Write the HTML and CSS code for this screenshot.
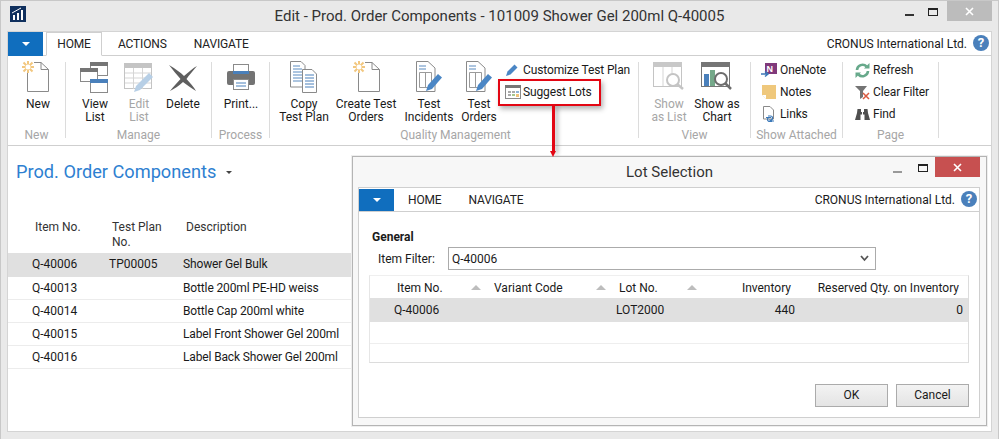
FILE: index.html
```html
<!DOCTYPE html>
<html lang="en">
<head>
    <meta charset="UTF-8">
    <title>Edit - Prod. Order Components</title>
    <link rel="stylesheet" href="styles.css">
</head>
<body>
<svg class="defs" width="0" height="0">
    <symbol id="new-page" viewBox="0 0 27 32">
        <path d="M5.500 8V30.500H26.500V8.500L19 1.500H12M19 1.500V8.500H26.500" fill="#fff" stroke="#8a8a8a"/>
        <g stroke="#f2c77f" stroke-width="2"><path d="M6 0V12M0 6H12M1.500 1.500L10.500 10.500M10.500 1.500L1.500 10.500"/></g>
        <circle cx="6" cy="6" r="2.500" fill="#fff"/>
    </symbol>
    <symbol id="doc-copy" viewBox="0 0 28 32">
        <path d="M.5 .5H11L15 4.500V26H.5Z" fill="#fff" stroke="#8a8a8a"/>
        <path d="M3 5H10M3 8H12M3 11H12M3 14H12M3 17H12M3 20H12" stroke="#5b8bc0"/>
        <path d="M12.500 8.500H22L26.500 13V31.500H12.500Z" fill="#fff" stroke="#8a8a8a"/>
        <path d="M15 14H24M15 17H24M15 20H24M15 23H24M15 26H24" stroke="#4a80bb"/>
    </symbol>
    <symbol id="doc-edit" viewBox="0 0 28 32">
        <path d="M1.500 .5H13L20 7V30.500H1.500Z" fill="#fff" stroke="#8a8a8a"/>
        <path d="M4 5H11M4 8H11" stroke="#5b8bc0"/>
        <path d="M4.500 11.500H16.500V26.500H4.500ZM10.500 11.500V26.500" fill="none" stroke="#9a9a9a"/>
        <path d="M11 30L13 24L23 13L27 16.500L17 28Z" fill="#4a86c5"/>
    </symbol>
    <symbol id="pencil" viewBox="0 0 14 14">
        <path d="M1 13L2.500 8.500L9.500 1.500L12.500 4.500L5.500 11.500Z" fill="#4a86c5"/>
    </symbol>
</svg>

<div class="window">
    <div class="titlebar">
        <svg class="logo" width="16" height="16" viewBox="0 0 16 16">
            <rect width="16" height="16" fill="#10305e"/>
            <path d="M3 9H5V14H3ZM7 7H9V14H7ZM11 4H13V14H11Z" fill="#fff"/>
            <path d="M2 7L11 2" stroke="#fff"/>
        </svg>
        <div class="title">Edit - Prod. Order Components - 101009 Shower Gel 200ml Q-40005</div>
        <div class="min-btn"></div>
        <div class="max-btn"></div>
        <div class="close-btn gray">
            <svg width="9" height="9" viewBox="0 0 9 9"><path d="M1 1L8 8M8 1L1 8" stroke="#fff" stroke-width="1.600"/></svg>
        </div>
    </div>

    <div class="main">
        <div class="tabs">
            <div class="app-btn"><span class="caret"></span></div>
            <div class="tab active">HOME</div>
            <div class="tab tab-actions">ACTIONS</div>
            <div class="tab tab-nav">NAVIGATE</div>
            <div class="company">CRONUS International Ltd.</div>
            <div class="help">?</div>
        </div>

        <div class="ribbon">
            <div class="group g-new">
                <div class="buttons">
                    <div class="big w38">
                        <svg class="icon" width="27" height="32"><use href="#new-page"/></svg>
                        <span>New</span>
                    </div>
                </div>
                <div class="group-label">New</div>
            </div>

            <div class="group g-manage">
                <div class="buttons">
                    <div class="big w44">
                        <svg class="icon" width="30" height="32" viewBox="0 0 30 32">
                            <rect x="10.500" y="1.500" width="17" height="13" fill="#fff" stroke="#8a8a8a"/><rect x="10" y="1" width="18" height="4" fill="#757575"/>
                            <rect x=".500" y="7.500" width="17" height="13" fill="#fff" stroke="#8a8a8a"/><rect y="7" width="18" height="4" fill="#757575"/>
                            <rect x="10.500" y="18.500" width="17" height="13" fill="#fff" stroke="#8a8a8a"/><rect x="10" y="18" width="18" height="4" fill="#4a80bb"/>
                        </svg>
                        <span>View<br>List</span>
                    </div>
                    <div class="big w44 off">
                        <svg class="icon" width="30" height="32" viewBox="0 0 30 32">
                            <rect x=".500" y="2.500" width="27" height="25" fill="#fff" stroke="#c4c4c4"/><rect y="2" width="28" height="5" fill="#c4c4c4"/>
                            <path d="M1 12H27M1 17H27M1 22H27M9.500 7V28M18.500 7V28" stroke="#d5d5d5"/>
                            <path d="M10 31L12 25L25 12L29 16L16 29Z" fill="#b7cfe6"/>
                        </svg>
                        <span>Edit<br>List</span>
                    </div>
                    <div class="big w44">
                        <svg class="icon" width="30" height="32" viewBox="0 0 30 32">
                            <path d="M1 4C8 8 13 12 16 15C21 11 25 7 29 5C25 10 21 14 18.500 18C22 22 26 26 28 30C23 27 19 24 15 21C11 25 6 28 2 30C5 26 9 22 12.500 18C9 14 5 9 1 4Z" fill="#5f5f5f"/>
                        </svg>
                        <span>Delete</span>
                    </div>
                </div>
                <div class="group-label">Manage</div>
            </div>

            <div class="group g-process">
                <div class="buttons">
                    <div class="big w58">
                        <svg class="icon" width="30" height="32" viewBox="0 0 30 32">
                            <rect x="7.500" y="3.500" width="15" height="9" fill="#fff" stroke="#8a8a8a"/>
                            <rect x="1" y="10" width="28" height="14" rx="2" fill="#737373"/>
                            <rect x="7" y="10" width="16" height="3" fill="#4a80bb"/>
                            <rect x="7.500" y="18.500" width="15" height="10" fill="#fff" stroke="#8a8a8a"/>
                            <path d="M10 22H20M10 25H20" stroke="#4a80bb"/>
                        </svg>
                        <span>Print...</span>
                    </div>
                </div>
                <div class="group-label">Process</div>
            </div>

            <div class="group g-quality">
                <div class="buttons">
                    <div class="big w62">
                        <svg class="icon" width="28" height="32"><use href="#doc-copy"/></svg>
                        <span>Copy<br>Test Plan</span>
                    </div>
                    <div class="big w62">
                        <svg class="icon" width="27" height="32"><use href="#new-page"/></svg>
                        <span>Create Test<br>Orders</span>
                    </div>
                    <div class="big w64">
                        <svg class="icon" width="28" height="32"><use href="#doc-edit"/></svg>
                        <span>Test<br>Incidents</span>
                    </div>
                    <div class="big w36">
                        <svg class="icon" width="28" height="32"><use href="#doc-edit"/></svg>
                        <span>Test<br>Orders</span>
                    </div>
                    <div class="smalls s-quality">
                        <div class="small">
                            <svg width="14" height="14"><use href="#pencil"/></svg>
                            <span>Customize Test Plan</span>
                        </div>
                        <div class="small">
                            <svg width="16" height="14" viewBox="0 0 16 14">
                                <rect x=".500" y=".500" width="15" height="13" fill="#fff" stroke="#8a8a8a"/><rect width="16" height="3" fill="#777"/>
                                <path d="M3 6H6V8H3ZM7 6H10V8H7ZM3 9H6V11H3Z" fill="#aaa"/>
                                <path d="M11 6H14V8H11Z" fill="#8fb4d8"/><path d="M7 9H10V11H7Z" fill="#a5c78e"/><path d="M11 9H14V12H11Z" fill="#eec27a"/>
                            </svg>
                            <span>Suggest Lots</span>
                        </div>
                    </div>
                </div>
                <div class="group-label">Quality Management</div>
            </div>

            <div class="group g-view">
                <div class="buttons">
                    <div class="big w48 off">
                        <svg class="icon" width="32" height="32" viewBox="0 0 32 32">
                            <rect x=".500" y="1.500" width="28" height="24" fill="#fff" stroke="#c4c4c4"/><rect y="1" width="29" height="5" fill="#c8c8c8"/>
                            <path d="M10 6V25M19 6V16" stroke="#d5d5d5"/>
                            <circle cx="20" cy="19" r="6" fill="#fff" stroke="#c4c4c4" stroke-width="2"/><path d="M24 23L30 28" stroke="#c4c4c4" stroke-width="2.500"/>
                        </svg>
                        <span>Show<br>as List</span>
                    </div>
                    <div class="big w48">
                        <svg class="icon" width="32" height="32" viewBox="0 0 32 32">
                            <rect x=".500" y="1.500" width="28" height="24" fill="#fff" stroke="#757575"/><rect y="1" width="29" height="5" fill="#757575"/>
                            <rect x="3" y="13" width="5" height="12" fill="#4a80bb"/><rect x="9" y="9" width="5" height="16" fill="#75a98a"/>
                            <circle cx="20" cy="18" r="6" fill="#fff" stroke="#6d6d6d" stroke-width="2"/><path d="M24 22L30 28" stroke="#6d6d6d" stroke-width="2.500"/>
                        </svg>
                        <span>Show as<br>Chart</span>
                    </div>
                </div>
                <div class="group-label">View</div>
            </div>

            <div class="group g-attached">
                <div class="smalls">
                    <div class="small">
                        <svg width="16" height="16" viewBox="0 0 16 16">
                            <rect x="4" y="1" width="12" height="11" fill="#80397b"/>
                            <text x="5.500" y="10" class="onenote-n">N</text>
                            <path d="M0 12H6M4 9.500L7 12L4 14.500" fill="none" stroke="#3b78b8" stroke-width="1.500"/>
                        </svg>
                        <span>OneNote</span>
                    </div>
                    <div class="small">
                        <svg width="16" height="16" viewBox="0 0 16 16">
                            <path d="M1 1H15V15H5L1 11Z" fill="#efc87c"/><path d="M1 11H5V15Z" fill="#fff"/>
                        </svg>
                        <span>Notes</span>
                    </div>
                    <div class="small">
                        <svg width="16" height="16" viewBox="0 0 16 16">
                            <path d="M2.500 .5H9L12.500 4V13H2.500Z" fill="#fff" stroke="#8a8a8a"/>
                            <path d="M5 11.500H9M9 15H13M7 10H9.500A2 2 0 0 1 9.500 14H8M11 15.500H8.500A2 2 0 0 1 8.500 11.500H10" fill="none" stroke="#3b78b8" stroke-width="1.200"/>
                        </svg>
                        <span>Links</span>
                    </div>
                </div>
                <div class="group-label">Show Attached</div>
            </div>

            <div class="group g-page">
                <div class="smalls">
                    <div class="small">
                        <svg width="15" height="15" viewBox="0 0 15 15">
                            <path d="M2 7A5.500 5.500 0 0 1 11.500 3.500" fill="none" stroke="#67a98b" stroke-width="2.600"/><path d="M9 5.500H14.500V0Z" fill="#67a98b"/>
                            <path d="M13 8A5.500 5.500 0 0 1 3.500 11.500" fill="none" stroke="#67a98b" stroke-width="2.600"/><path d="M6 9.500H.5V15Z" fill="#67a98b"/>
                        </svg>
                        <span>Refresh</span>
                    </div>
                    <div class="small">
                        <svg width="15" height="15" viewBox="0 0 15 15">
                            <path d="M0 1H12L8 6V12L5 14V6Z" fill="#747474"/>
                            <path d="M8 8L14 14M14 8L8 14" stroke="#d9593f" stroke-width="1.500"/>
                        </svg>
                        <span>Clear Filter</span>
                    </div>
                    <div class="small">
                        <svg width="15" height="15" viewBox="0 0 15 15">
                            <path d="M2.500 2H6V5H9V2H12.500L13 6L15 13H9.500V7.500H5.500V13H0L2 6Z" fill="#4f4f4f"/>
                            <path d="M7.500 5V13" stroke="#fff"/>
                        </svg>
                        <span>Find</span>
                    </div>
                </div>
                <div class="group-label">Page</div>
            </div>
        </div>

        <div class="page">
            <div class="page-title">Prod. Order Components <span class="title-caret"></span></div>
            <div class="list">
                <div class="list-row list-head">
                    <div class="c-item">Item No.</div>
                    <div class="c-plan">Test Plan<br>No.</div>
                    <div class="c-desc">Description</div>
                </div>
                <div class="list-row item selected">
                    <div class="c-item">Q-40006</div><div class="c-plan">TP00005</div><div class="c-desc">Shower Gel Bulk</div>
                </div>
                <div class="list-row item">
                    <div class="c-item">Q-40013</div><div class="c-plan"></div><div class="c-desc">Bottle 200ml PE-HD weiss</div>
                </div>
                <div class="list-row item">
                    <div class="c-item">Q-40014</div><div class="c-plan"></div><div class="c-desc">Bottle Cap 200ml white</div>
                </div>
                <div class="list-row item">
                    <div class="c-item">Q-40015</div><div class="c-plan"></div><div class="c-desc">Label Front Shower Gel 200ml</div>
                </div>
                <div class="list-row item">
                    <div class="c-item">Q-40016</div><div class="c-plan"></div><div class="c-desc">Label Back Shower Gel 200ml</div>
                </div>
            </div>
        </div>
    </div>

    <div class="callout"></div>
    <div class="arrow"></div>

    <div class="dialog">
        <div class="dialog-title">
            <div class="title small-title">Lot Selection</div>
            <div class="min-btn"></div>
            <div class="max-btn"></div>
            <div class="close-btn red">
                <svg width="9" height="9" viewBox="0 0 9 9"><path d="M1 1L8 8M8 1L1 8" stroke="#fff" stroke-width="1.600"/></svg>
            </div>
        </div>
        <div class="dialog-inner">
            <div class="tabs dialog-tabs">
                <div class="app-btn"><span class="caret"></span></div>
                <div class="tab tab-home2">HOME</div>
                <div class="tab tab-nav2">NAVIGATE</div>
                <div class="company">CRONUS International Ltd.</div>
                <div class="help">?</div>
            </div>
            <div class="dialog-body">
                <div class="section">General</div>
                <div class="filter">
                    <label>Item Filter:</label>
                    <div class="combo">
                        <span>Q-40006</span>
                        <svg width="9" height="7" viewBox="0 0 9 7"><path d="M1 1L4.500 5L8 1" fill="none" stroke="#555" stroke-width="1.800"/></svg>
                    </div>
                </div>
                <div class="lots">
                    <div class="lot-row lot-head">
                        <div class="l-item">Item No.<i class="sort"></i></div>
                        <div class="l-var">Variant Code<i class="sort"></i></div>
                        <div class="l-lot">Lot No.<i class="sort"></i></div>
                        <div class="l-inv">Inventory</div>
                        <div class="l-res">Reserved Qty. on Inventory</div>
                    </div>
                    <div class="lot-row lot-sel">
                        <div class="l-item">Q-40006</div>
                        <div class="l-var"></div>
                        <div class="l-lot">LOT2000</div>
                        <div class="l-inv">440</div>
                        <div class="l-res">0</div>
                    </div>
                    <div class="lot-empty"></div>
                </div>
                <div class="actions">
                    <div class="btn">OK</div>
                    <div class="btn">Cancel</div>
                </div>
            </div>
        </div>
    </div>
</div>
</body>
</html>
```

FILE: styles.css
```css
* {
    box-sizing: border-box;
}
body {
    margin: 0;
    font-family: Roboto, "Open Sans", sans-serif;
    font-size: 12px;
    color: #1a1a1a;
    background: #e8e8e8;
}
.defs {
    position: absolute;
}
svg {
    display: block;
    flex: none;
}
.window {
    position: relative;
    width: 999px;
    height: 439px;
    overflow: hidden;
    background: #e9e9e9;
    border: 1px solid #c8c8c8;
    border-bottom: 0;
    display: flex;
    flex-direction: column;
}

/* title bars */
.titlebar {
    height: 30px;
    display: flex;
    flex: none;
    position: relative;
    padding-left: 9px;
}
.logo {
    margin-top: 5px;
}
.title {
    position: absolute;
    left: 0;
    right: 0;
    top: 5px;
    text-align: center;
    font-size: 15px;
    line-height: 20px;
    color: #333;
}
.min-btn {
    position: absolute;
    right: 84px;
    top: 13px;
    width: 9px;
    height: 2px;
    background: #333;
}
.max-btn {
    position: absolute;
    right: 60px;
    top: 7px;
    width: 10px;
    height: 8px;
    border: 1px solid #222;
    border-top-width: 2px;
}
.close-btn {
    position: absolute;
    right: 6px;
    top: 0;
    width: 45px;
    height: 20px;
    display: flex;
    align-items: center;
    justify-content: center;
}
.close-btn.gray {
    background: #bcbcbc;
}
.close-btn.red {
    background: #c75050;
}

/* main frame */
.main {
    flex: none;
    width: 985px;
    height: 401px;
    margin-left: 6px;
    background: #fff;
    border: 1px solid #d4d4d4;
}
.tabs {
    height: 24px;
    display: flex;
    align-items: stretch;
    position: relative;
    border-bottom: 1px solid #cfcfcf;
}
.app-btn {
    width: 35px;
    margin-bottom: -1px;
    background: #106ebe;
    display: flex;
    align-items: center;
    justify-content: center;
}
.caret {
    width: 0;
    height: 0;
    border-left: 4px solid transparent;
    border-right: 4px solid transparent;
    border-top: 4px solid #fff;
}
.tab {
    line-height: 24px;
    color: #222;
    letter-spacing: -0.15px;
}
.tab.active {
    width: 56px;
    margin-left: 3px;
    height: 24px;
    text-align: center;
    border: 1px solid #cfcfcf;
    border-bottom-color: #fff;
    line-height: 23px;
}
.tab-actions {
    margin-left: 16px;
}
.tab-nav {
    margin-left: 27px;
}
.company {
    margin-left: auto;
    margin-right: 24px;
    line-height: 24px;
}
.help {
    position: absolute;
    right: 2px;
    top: 3px;
    width: 16px;
    height: 16px;
    border-radius: 50%;
    background: #4a80bb;
    color: #fff;
    font-weight: 700;
    font-size: 13px;
    line-height: 16px;
    text-align: center;
}

/* ribbon */
.ribbon {
    height: 90px;
    display: flex;
    align-items: flex-start;
    padding-top: 6px;
    border-bottom: 1px solid #cfcfcf;
}
.group {
    height: 76px;
    display: flex;
    flex-direction: column;
    border-right: 1px solid #dcdcdc;
    flex: none;
}
.buttons {
    display: flex;
    flex: 1;
}
.group-label {
    height: 15px;
    line-height: 15px;
    margin-bottom: -5px;
    text-align: center;
    color: #a6a6a6;
}
.g-new {
    width: 58px;
}
.g-new .buttons {
    padding-left: 11px;
}
.g-new .icon {
    margin-left: -5px;
}
.g-manage {
    width: 146px;
}
.g-manage .buttons {
    padding-left: 7px;
}
.g-process {
    width: 58px;
}
.g-quality {
    width: 369px;
}
.g-quality .buttons {
    padding-left: 3px;
}
.g-quality .group-label {
    padding-left: 3px;
}
.g-view {
    width: 112px;
}
.g-view .buttons {
    padding-left: 6px;
}
.g-attached {
    width: 92px;
    padding-left: 10px;
}
.g-attached .group-label {
    margin-left: -10px;
}
.g-page {
    width: 96px;
    padding-left: 12px;
}
.g-page .group-label {
    margin-left: -12px;
}
.big {
    display: flex;
    flex-direction: column;
    align-items: center;
    text-align: center;
    line-height: 13px;
    flex: none;
}
.big .icon {
    margin-top: -1px;
    margin-bottom: 5px;
}
.off {
    color: #a6a6a6;
}
.w36 { width: 36px; }
.w38 { width: 38px; }
.w44 { width: 44px; }
.w48 { width: 48px; }
.w58 { width: 58px; }
.w62 { width: 62px; }
.w64 { width: 64px; }
.smalls {
    display: flex;
    flex-direction: column;
    margin-top: -3px;
    flex: 1;
}
.s-quality {
    margin-left: 8px;
}
.small {
    height: 22px;
    display: flex;
    align-items: center;
    gap: 3px;
    white-space: nowrap;
    letter-spacing: -0.12px;
}
.s-quality .small {
    gap: 4px;
}
.s-quality .small:nth-child(2) {
    gap: 2px;
}
.onenote-n {
    font-family: "Liberation Sans", sans-serif;
    font-size: 9px;
    font-weight: 700;
    fill: #fff;
}

/* list behind the dialog */
.page {
    height: 285px;
}
.page-title {
    padding: 14px 0 0 8px;
    height: 74px;
    font-size: 18.200px;
    line-height: 24px;
    color: #2e7fd1;
}
.title-caret {
    display: inline-block;
    width: 0;
    height: 0;
    margin: 0 0 4px 5px;
    border-left: 3px solid transparent;
    border-right: 3px solid transparent;
    border-top: 3px solid #444;
}
.list {
    width: 344px;
}
.list-row {
    display: grid;
    grid-template-columns: 101px 74px 1fr;
    white-space: nowrap;
}
.list-head {
    height: 33px;
    line-height: 15px;
    color: #333;
}
.list-head .c-item {
    padding-left: 27px;
}
.list-head .c-plan {
    padding-left: 3px;
}
.list-head .c-desc {
    padding-left: 3px;
}
.item {
    height: 23px;
    line-height: 23px;
    border-bottom: 1px solid #ececec;
}
.item .c-item {
    padding-left: 24px;
}
.item .c-desc {
    letter-spacing: -0.14px;
}
.selected {
    height: 24px;
    background: #e0e0e0;
    border-bottom: 0;
}

/* highlight over the ribbon */
.callout {
    position: absolute;
    left: 497px;
    top: 78px;
    width: 103px;
    height: 27px;
    border: 2px solid #e30613;
    box-shadow: 2px 3px 5px rgba(0, 0, 0, 0.3);
}
.arrow {
    position: absolute;
    left: 551px;
    top: 104px;
    width: 3px;
    height: 47px;
    background: #e30613;
    box-shadow: 3px 2px 4px rgba(0, 0, 0, 0.3);
    z-index: 2;
}
.arrow::after {
    content: "";
    position: absolute;
    left: -2px;
    bottom: -5px;
    border-left: 3.500px solid transparent;
    border-right: 3.500px solid transparent;
    border-top: 6px solid #e30613;
}

/* dialog */
.dialog {
    position: absolute;
    left: 351px;
    top: 155px;
    width: 635px;
    height: 270px;
    background: #f7f7f7;
    border: 1px solid #b4b4b4;
    box-shadow: 0 0 0 1px #eee;
    display: flex;
    flex-direction: column;
}
.dialog-title {
    height: 30px;
    position: relative;
    flex: none;
}
.small-title {
    top: 5px;
    font-size: 15px;
}
.dialog .min-btn {
    right: 84px;
    top: 14px;
    background: #999;
}
.dialog .max-btn {
    right: 58px;
    top: 7px;
}
.dialog .close-btn {
    right: 6px;
}
.dialog-inner {
    flex: 1;
    margin: 0 6px 7px 5px;
    background: #fff;
    border: 1px solid #cfcfcf;
}
.dialog-tabs .app-btn {
    margin: 1px 0 0 0;
}
.tab-home2 {
    margin-left: 14px;
}
.tab-nav2 {
    margin-left: 27px;
}
.dialog-body {
    padding: 17px 10px 0;
}
.section {
    font-weight: 700;
    height: 18px;
    line-height: 16px;
    padding-left: 3px;
}
.filter {
    display: flex;
    align-items: center;
    height: 23px;
}
.filter label {
    width: 79px;
    padding-left: 9px;
}
.combo {
    width: 428px;
    height: 23px;
    padding: 0 6px 0 3px;
    border: 1px solid #ababab;
    display: flex;
    align-items: center;
    justify-content: space-between;
}
.lots {
    margin-top: 5px;
    height: 88px;
    border: 1px solid #dcdcdc;
    border-top-color: #efefef;
    border-left-color: #e6e6e6;
}
.lot-row {
    display: grid;
    grid-template-columns: 118px 125px 91px 94px 1fr;
    height: 22px;
    line-height: 24px;
}
.lot-row > div {
    position: relative;
    white-space: nowrap;
}
.lot-head .l-item {
    padding-left: 27px;
}
.lot-head .l-var,
.lot-head .l-lot {
    padding-left: 6px;
}
.lot-head .l-inv {
    text-align: right;
    padding-right: 7px;
}
.lot-head .l-res {
    text-align: right;
    padding-right: 9px;
}
.sort {
    position: absolute;
    right: 7px;
    top: 9px;
    border-left: 5px solid transparent;
    border-right: 5px solid transparent;
    border-bottom: 5px solid #bdbdbd;
}
.lot-sel {
    height: 24px;
    line-height: 24px;
    background: #e0e0e0;
}
.lot-sel .l-item {
    padding-left: 24px;
}
.lot-sel .l-lot {
    padding-left: 3px;
}
.lot-sel .l-inv {
    text-align: right;
    padding-right: 3px;
}
.lot-sel .l-res {
    text-align: right;
    padding-right: 5px;
}
.lot-empty {
    height: 22px;
    border-bottom: 1px solid #eee;
}
.actions {
    margin-top: 21px;
    display: flex;
    justify-content: flex-end;
    gap: 8px;
}
.btn {
    width: 73px;
    height: 23px;
    line-height: 21px;
    text-align: center;
    border: 1px solid #ababab;
    background: linear-gradient(#f3f3f3, #e4e4e4);
}
```
